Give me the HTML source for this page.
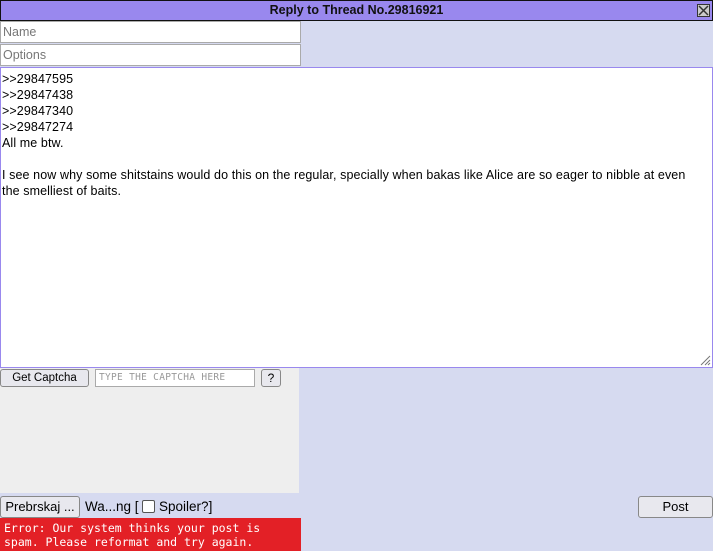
<!DOCTYPE html>
<html><head><style>
body{margin:0;width:713px;height:551px;background:#d6daf0;font-family:"Liberation Sans",Arial,sans-serif;font-size:12px;position:relative;overflow:hidden}
div,input,span{box-sizing:border-box;position:absolute}
.hdr{left:0;top:0;width:713px;height:21px;background:#9988ee;border:1px solid #111;text-align:center;font-weight:bold;font-size:12.5px;line-height:19px;color:#111}
.x{right:2px;top:3px;width:13px;height:13px;border:1px solid #333;background:#ccc}
.in{left:0;width:301px;height:22px;background:#fff;border:1px solid #aaa;color:#777;padding:2px 2px;font-size:12.5px;line-height:16px}
.ta{left:0;top:67px;width:713px;height:301px;background:#fff;border:1px solid #9988ee;padding:3px 2px 3px 1px;font-size:12.5px;line-height:16px;color:#000;letter-spacing:0.1px}
.btn{background:#e8e8ee;border:1px solid #888;border-radius:3px;text-align:center;color:#000}
</style></head><body>
<div class="hdr">Reply to Thread No.29816921<div class="x"><svg width="11" height="11" viewBox="0 0 11 11" style="position:absolute;left:0;top:0"><path d="M1 1L10 10M10 1L1 10" stroke="#333" stroke-width="1.5"/></svg></div></div>
<div class="in" style="top:21px">Name</div>
<div class="in" style="top:44px">Options</div>
<div class="ta">&gt;&gt;29847595<br>&gt;&gt;29847438<br>&gt;&gt;29847340<br>&gt;&gt;29847274<br>All me btw.<br><br>I see now why some shitstains would do this on the regular, specially when bakas like Alice are so eager to nibble at even<br>the smelliest of baits.
<svg width="12" height="12" style="position:absolute;right:1px;bottom:1px"><path d="M11 2L2 11M11 6L6 11M11 9L9 11" stroke="#777" stroke-width="1"/></svg></div>
<div style="left:0;top:368px;width:299px;height:125px;background:#eeeeee"></div>
<div class="btn" style="left:0;top:369px;width:89px;height:18px;font-size:11.5px;line-height:16px">Get Captcha</div>
<div style="left:95px;top:369px;width:160px;height:18px;background:#fff;border:1px solid #aaa;font-family:'DejaVu Sans Mono',monospace;font-size:9.5px;color:#999;padding-left:3px;line-height:16px;letter-spacing:0.3px">TYPE THE CAPTCHA HERE</div>
<div class="btn" style="left:261px;top:369px;width:20px;height:18px;line-height:16px">?</div>
<div class="btn" style="left:0;top:496px;width:80px;height:22px;font-size:13px;line-height:20px">Prebrskaj ...</div>
<div style="left:85px;top:499px;font-size:13.5px;line-height:16px">Wa...ng [ <span style="position:relative;display:inline-block;width:13px;height:13px;border:1px solid #555;background:#fff;vertical-align:-2px;border-radius:2px"></span> Spoiler?]</div>
<div class="btn" style="left:638px;top:496px;width:75px;height:22px;font-size:13px;line-height:20px">Post</div>
<div style="left:0;top:518px;width:301px;height:33px;background:#e32026;color:#fff;font-family:'DejaVu Sans Mono',monospace;font-size:11.5px;line-height:14px;padding:3px 4px">Error: Our system thinks your post is spam. Please reformat and try again.</div>
</body></html>
